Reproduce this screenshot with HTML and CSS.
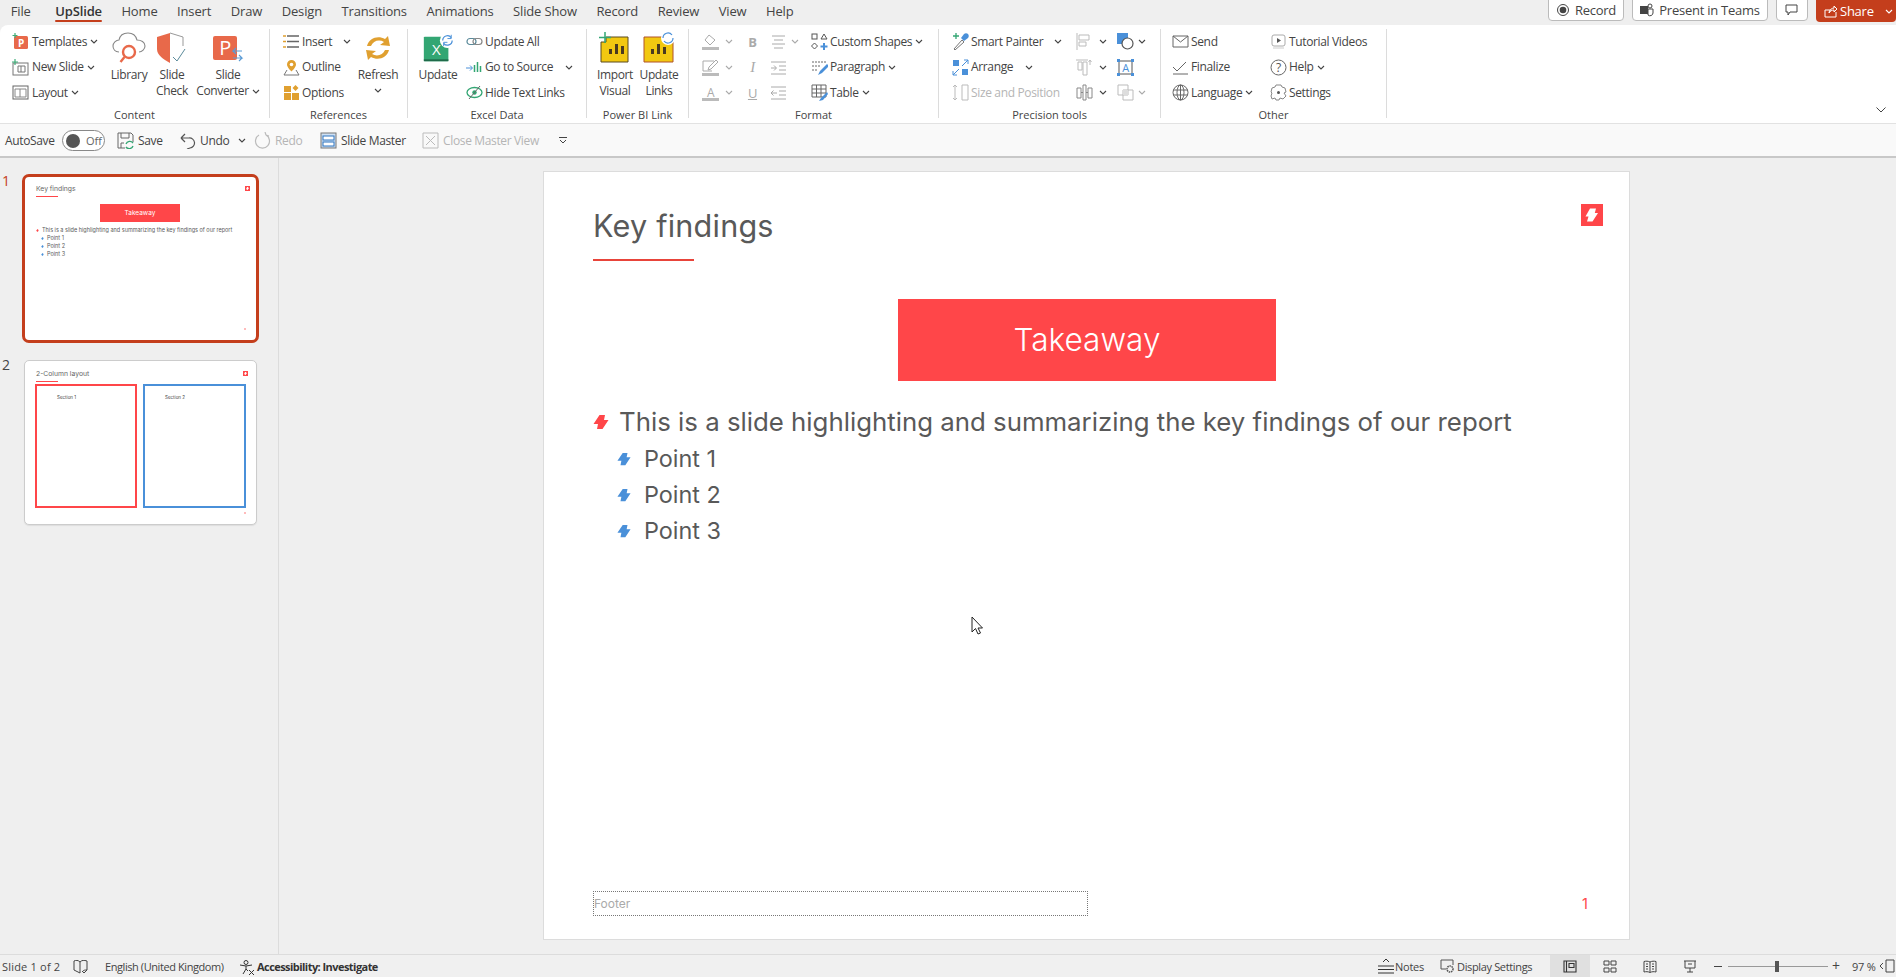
FILE: index.html
```html
<!DOCTYPE html>
<html lang="en">
<head>
<meta charset="utf-8">
<title>UpSlide - PowerPoint</title>
<link rel="stylesheet" href="styles.css">
</head>
<body>
<svg class="defs" width="0" height="0">
  <defs>
    <symbol id="chev" viewBox="0 0 8 5"><path d="M1 1l3 3 3-3" fill="none" stroke="currentColor" stroke-width="1.1"/></symbol>
    <symbol id="bolt" viewBox="0 0 16 16"><path d="M6.500 1H12l-1 5h4.500l-6 9H4l1-5H.5z" fill="currentColor"/></symbol>
  </defs>
</svg>
<div class="app">
  <header class="tabbar">
    <nav class="tabs">
      <span class="tab tab-file">File</span>
      <span class="tab tab-active">UpSlide</span>
      <span class="tab">Home</span>
      <span class="tab">Insert</span>
      <span class="tab">Draw</span>
      <span class="tab">Design</span>
      <span class="tab">Transitions</span>
      <span class="tab">Animations</span>
      <span class="tab">Slide Show</span>
      <span class="tab">Record</span>
      <span class="tab">Review</span>
      <span class="tab">View</span>
      <span class="tab">Help</span>
    </nav>
    <div class="actions">
      <span class="btn btn-record"><svg class="s14" viewBox="0 0 14 14"><circle cx="7" cy="7" r="5.500" fill="none" stroke="#444"/><circle cx="7" cy="7" r="3.300" fill="#444"/></svg>Record</span>
      <span class="btn btn-teams"><svg class="s14" viewBox="0 0 14 14"><rect x="0" y="3" width="8" height="8" fill="#444"/><circle cx="10" cy="3" r="2" fill="none" stroke="#444"/><path d="M8 6h5v4a3 3 0 0 1-5 2z" fill="none" stroke="#444"/></svg>Present in Teams</span>
      <span class="btn btn-comment"><svg class="s14" viewBox="0 0 14 14"><path d="M1 2h11v7H5l-2 3V9H1z" fill="none" stroke="#444"/></svg></span>
      <span class="btn-share"><svg class="s14" viewBox="0 0 14 14"><path d="M1 6v7h11V8M1 6h6M5 9c0-3 3-5 5-5V2l3 3-3 3V6c-2 0-4 1-5 3z" fill="none" stroke="#fff"/></svg><span class="share-label">Share</span><svg class="chev share-chev"><use href="#chev"/></svg></span>
    </div>
  </header>

  <section class="ribbon">
    <div class="group g-content">
      <div class="body">
        <div class="col c-content">
          <div class="row"><svg class="ic" viewBox="0 0 17 17"><rect x="2" y="3" width="14" height="13" rx="1.500" fill="#e8694a"/><text x="9" y="14" class="gl-p">P</text><path d="M3 0v5M.5 2.500h5" stroke="#3fae7a" stroke-width="1.200"/></svg>Templates<svg class="chev cm"><use href="#chev"/></svg></div>
          <div class="row"><svg class="ic" viewBox="0 0 17 17"><rect x="1" y="4" width="15" height="12" fill="none" stroke="#777"/><path d="M6 7h7v6H6zM9 7v6" fill="none" stroke="#777"/><path d="M3 0v6M0 3h6" stroke="#3fae7a" stroke-width="1.200"/></svg>New Slide<svg class="chev cm"><use href="#chev"/></svg></div>
          <div class="row"><svg class="ic" viewBox="0 0 17 17"><rect x="1" y="2" width="15" height="13" fill="none" stroke="#666"/><path d="M3 5h11v8H3zM8 5v8" fill="none" stroke="#888"/></svg>Layout<svg class="chev cm"><use href="#chev"/></svg></div>
        </div>
        <div class="big w-lib"><svg class="bi" viewBox="0 0 34 32"><path d="M7 20C3 20 1 17 1 14s3-6 6-6c1-5 5-7 9-7 5 0 8 3 9 7 4 0 8 2 8 6 0 3-3 6-6 6" fill="none" stroke="#888" stroke-width="1.100"/><circle cx="17" cy="20" r="6" fill="#fff" stroke="#e8694a" stroke-width="2.400"/><path d="M12.500 25l-4 5" stroke="#e8694a" stroke-width="2.400"/></svg><span>Library</span></div>
        <div class="big w-chk"><svg class="bi" viewBox="0 0 32 32"><path d="M14 1L1 5v12c0 6 6 10 13 14z" fill="#e8694a"/><path d="M14 1l13 4v9" fill="none" stroke="#999"/><path d="M17 25l4 4 8-12" fill="none" stroke="#5a8a9a"/></svg><span>Slide<br>Check</span></div>
        <div class="big w-conv"><svg class="bi" viewBox="0 0 32 32"><rect x="1" y="4" width="24" height="24" rx="2" fill="#e8694a"/><text x="13" y="23" class="gl-pb">P</text><path d="M30 19h-9l3-3M21 19l3 3M21 26h9l-3-3M30 26l-3 3" fill="none" stroke="#5b9bd5" stroke-width="1.100"/></svg><span>Slide<br>Converter<svg class="chev cm"><use href="#chev"/></svg></span></div>
      </div>
      <div class="glabel">Content</div>
    </div>

    <div class="group g-ref">
      <div class="body">
        <div class="col c-ref">
          <div class="row"><svg class="ic" viewBox="0 0 17 17"><path d="M4 3h12M4 8.500h12M4 14h12" stroke="#666" stroke-width="1.300"/><path d="M0 3h3M0 8.500h3M0 14h3" stroke="#e0a030" stroke-width="1.300"/></svg>Insert<svg class="chev ml-insert"><use href="#chev"/></svg></div>
          <div class="row"><svg class="ic" viewBox="0 0 17 17"><path d="M8.500 1a4.500 4.500 0 0 1 4.500 4.500c0 3-4.500 7-4.500 7S4 8.500 4 5.500A4.500 4.500 0 0 1 8.500 1z" fill="#e0a030"/><circle cx="8.500" cy="5.500" r="1.800" fill="#fff"/><path d="M4 11L1 16h15l-3-5" fill="none" stroke="#777"/></svg>Outline</div>
          <div class="row"><svg class="ic" viewBox="0 0 17 17"><rect x="1" y="2" width="7" height="6" fill="#e0a030"/><rect x="1" y="9" width="7" height="7" fill="#e0a030"/><rect x="9" y="9" width="7" height="7" fill="#e0a030"/><path d="M12.500 1l3 3-3 3-3-3z" fill="#e0a030"/></svg>Options</div>
        </div>
        <div class="big w-refresh"><svg class="bi" viewBox="0 0 34 32"><path d="M6 14C8 6 17 3 24 7l3-3 2 10-10-1 4-3c-5-3-11-1-13 4zM28 18C26 26 17 29 10 25l-3 3-2-10 10 1-4 3c5 3 11 1 13-4z" fill="#e0a030"/></svg><span>Refresh</span><svg class="chev cb"><use href="#chev"/></svg></div>
      </div>
      <div class="glabel">References</div>
    </div>

    <div class="group g-excel">
      <div class="body">
        <div class="big w-upd"><svg class="bi" viewBox="0 0 36 32"><rect x="3" y="4" width="26" height="26" rx="1" fill="#33a673"/><path d="M3 28h26v2H3z" fill="#1f6b4a"/><text x="16" y="23" class="gl-x">X</text><circle cx="28" cy="8" r="8" fill="#fff"/><path d="M23 8a5 5 0 0 1 9-3M33 8a5 5 0 0 1-9 3" fill="none" stroke="#4a90d9" stroke-width="1.300"/><path d="M32 2v4h-4M24 14v-4h4" fill="none" stroke="#4a90d9"/></svg><span>Update</span></div>
        <div class="col c-excel">
          <div class="row"><svg class="ic" viewBox="0 0 17 17"><rect x="1" y="5.500" width="9" height="6" rx="3" fill="none" stroke="#5a8a9a" stroke-width="1.200"/><rect x="7" y="5.500" width="9" height="6" rx="3" fill="none" stroke="#888" stroke-width="1.200"/></svg>Update All</div>
          <div class="row"><svg class="ic" viewBox="0 0 17 17"><path d="M0 9h6M4 6.500L6.500 9 4 11.500" fill="none" stroke="#4a90d9"/><path d="M8.500 6v7M11.500 3v10M14.500 7v6" stroke="#33a673" stroke-width="1.500"/></svg>Go to Source<svg class="chev ml-go"><use href="#chev"/></svg></div>
          <div class="row"><svg class="ic" viewBox="0 0 17 17"><ellipse cx="8.500" cy="8.500" rx="7.500" ry="5" fill="none" stroke="#33a673" stroke-width="1.300"/><circle cx="8.500" cy="8.500" r="2.200" fill="#33a673"/><path d="M3 15L14 2" stroke="#666"/></svg>Hide Text Links</div>
        </div>
      </div>
      <div class="glabel">Excel Data</div>
    </div>

    <div class="group g-pbi">
      <div class="body b-pbi">
        <div class="big w-imp"><svg class="bi" viewBox="0 0 32 32"><path d="M2 10h5V5h22v25H2z" fill="#f2c811" stroke="#5a4a20"/><path d="M10 22h3v-5h-3zM16 22h3v-10h-3zM22 22h3v-8h-3z" fill="#4a3a20"/><path d="M6 0v11M0 5.500h12" stroke="#33a673" stroke-width="1.500"/></svg><span>Import<br>Visual</span></div>
        <div class="big w-upl"><svg class="bi" viewBox="0 0 32 32"><path d="M1 5h22v5h7v20H1z" fill="#f2c811" stroke="#b0522a"/><path d="M8 22h3v-5H8zM14 22h3v-10h-3zM20 22h3v-7h-3z" fill="#4a3a20"/><circle cx="25" cy="6" r="7" fill="#fff"/><path d="M20 6a5 5 0 0 1 9-3M30 6a5 5 0 0 1-9 3" fill="none" stroke="#4a90d9" stroke-width="1.200"/></svg><span>Update<br>Links</span></div>
      </div>
      <div class="glabel">Power BI Link</div>
    </div>

    <div class="group g-format">
      <div class="body">
        <div class="col c-f1 dim">
          <div class="row"><svg class="ic" viewBox="0 0 17 17"><path d="M7 2l6 5-5 5-5-5z" fill="none" stroke="#aaa"/><path d="M0 14h17v3H0z" fill="#bbb"/></svg><svg class="chev"><use href="#chev"/></svg></div>
          <div class="row"><svg class="ic" viewBox="0 0 17 17"><path d="M1 2h11M1 2v10h9M14 1l2 2-7 7-3 1 1-3z" fill="none" stroke="#aaa"/><path d="M0 14h17v3H0z" fill="#bbb"/></svg><svg class="chev"><use href="#chev"/></svg></div>
          <div class="row"><svg class="ic" viewBox="0 0 17 17"><text x="8.500" y="13" class="gl-a">A</text><path d="M0 14h17v3H0z" fill="#bbb"/></svg><svg class="chev"><use href="#chev"/></svg></div>
        </div>
        <div class="col c-f2 dim">
          <div class="row"><span class="fmt fmt-b">B</span></div>
          <div class="row"><span class="fmt fmt-i">I</span></div>
          <div class="row"><span class="fmt fmt-u">U</span></div>
        </div>
        <div class="col c-f3 dim">
          <div class="row"><svg class="ic ic0" viewBox="0 0 17 17"><path d="M2 3h13M4 7h9M2 11h13M4 15h9" stroke="#aaa"/></svg><svg class="chev cg"><use href="#chev"/></svg></div>
          <div class="row"><svg class="ic ic0" viewBox="0 0 17 17"><path d="M1 3h15M9 7h7M9 11h7M1 15h15M1 9h5M4 6.500L6.500 9 4 11.500" fill="none" stroke="#aaa"/></svg></div>
          <div class="row"><svg class="ic ic0" viewBox="0 0 17 17"><path d="M1 3h15M9 7h7M9 11h7M1 15h15M1 9h6M3.500 6.500L1 9l2.500 2.500" fill="none" stroke="#aaa"/></svg></div>
        </div>
        <div class="col c-f4">
          <div class="row"><svg class="ic" viewBox="0 0 17 17"><rect x="1" y="1" width="5" height="5" fill="none" stroke="#555"/><path d="M13 1l3 5h-6z" fill="none" stroke="#555"/><path d="M3.500 10l3 3-3 3-3-3z" fill="none" stroke="#555"/><path d="M13 10v7M9.500 13.500h7" stroke="#4a90d9" stroke-width="2"/></svg>Custom Shapes<svg class="chev cm"><use href="#chev"/></svg></div>
          <div class="row"><svg class="ic" viewBox="0 0 17 17"><path d="M1 3h14M1 7h9M1 11h5" stroke="#666" stroke-dasharray="2 1"/><path d="M16 5l-7 7-2 4 4-2 7-7z" fill="#4a90d9"/></svg>Paragraph<svg class="chev cm"><use href="#chev"/></svg></div>
          <div class="row"><svg class="ic" viewBox="0 0 17 17"><path d="M1 1h14v12H1zM1 5h14M1 9h14M5.500 1v12M10 1v12" fill="none" stroke="#666"/><path d="M16 8l-6 6-2 3 4-1 5-6z" fill="#4a90d9"/></svg>Table<svg class="chev cm"><use href="#chev"/></svg></div>
        </div>
      </div>
      <div class="glabel">Format</div>
    </div>

    <div class="group g-prec">
      <div class="body">
        <div class="col c-p1">
          <div class="row"><svg class="ic" viewBox="0 0 17 17"><path d="M2 16l8-9 2 2-9 8z" fill="none" stroke="#777"/><path d="M9 5l3-4c1-1 3-1 4 0s1 3 0 4l-4 3z" fill="#4a90d9"/><path d="M4 0v6M1 3h6" stroke="#33a673" stroke-width="1.300"/></svg>Smart Painter<svg class="chev ml-sp"><use href="#chev"/></svg></div>
          <div class="row"><svg class="ic" viewBox="0 0 17 17"><rect x="1" y="1" width="6" height="6" fill="#4a90d9"/><rect x="10" y="10" width="6" height="6" fill="#4a90d9"/><path d="M10 7l6-6M12 1h4v4M7 10l-6 6M5 16H1v-4" fill="none" stroke="#4a90d9"/></svg>Arrange<svg class="chev ml-ar"><use href="#chev"/></svg></div>
          <div class="row dimtext"><svg class="ic" viewBox="0 0 17 17"><path d="M10 1h6v15h-6zM3 1v15M1 3l2-2 2 2M1 14l2 2 2-2" fill="none" stroke="#bbb"/></svg>Size and Position</div>
        </div>
        <div class="col c-p2">
          <div class="row"><svg class="ic" viewBox="0 0 17 17"><path d="M1 0v17M3 2h10v5H3zM3 9h7v4H3z" fill="none" stroke="#bbb"/></svg><svg class="chev"><use href="#chev"/></svg></div>
          <div class="row"><svg class="ic" viewBox="0 0 17 17"><path d="M0 1h12M2 3h4v8H2zM7 3h4v13H7zM14 6V1M12.500 3L14 1l1.500 2" fill="none" stroke="#bbb"/></svg><svg class="chev"><use href="#chev"/></svg></div>
          <div class="row"><svg class="ic" viewBox="0 0 17 17"><path d="M1 4h4v10H1zM12 4h4v10h-4zM7 1h3v15H7zM5 8.500h2M10 8.500h2" fill="none" stroke="#888"/></svg><svg class="chev"><use href="#chev"/></svg></div>
        </div>
        <div class="col c-p3">
          <div class="row"><svg class="ic" viewBox="0 0 17 17"><rect x="0" y="0" width="11" height="11" fill="#4a90d9"/><circle cx="10.500" cy="10.500" r="5.500" fill="#fff" stroke="#555" stroke-width="1.200"/></svg><svg class="chev"><use href="#chev"/></svg></div>
          <div class="row"><svg class="ic" viewBox="0 0 17 17"><path d="M2 2h13v13H2z" fill="none" stroke="#555"/><path d="M0 0h3v3H0zM14 0h3v3h-3zM0 14h3v3H0zM14 14h3v3h-3z" fill="#4a90d9"/><text x="8.500" y="13" class="gl-ab">A</text></svg></div>
          <div class="row dim"><svg class="ic" viewBox="0 0 17 17"><path d="M1 1h10v10H1zM6 6h10v10H6z" fill="none" stroke="#bbb"/><path d="M6 6h5v5H6z" fill="#ddd"/></svg><svg class="chev"><use href="#chev"/></svg></div>
        </div>
      </div>
      <div class="glabel">Precision tools</div>
    </div>

    <div class="group g-other">
      <div class="body">
        <div class="col c-o1">
          <div class="row"><svg class="ic" viewBox="0 0 17 17"><path d="M1 3h15v11H1zM1 3l7.500 6L16 3" fill="none" stroke="#666"/></svg>Send</div>
          <div class="row"><svg class="ic" viewBox="0 0 17 17"><path d="M1 15h15" stroke="#666"/><path d="M1 8l4 4 9-9" fill="none" stroke="#666"/></svg>Finalize</div>
          <div class="row"><svg class="ic" viewBox="0 0 17 17"><circle cx="8.500" cy="8.500" r="7.500" fill="none" stroke="#666"/><ellipse cx="8.500" cy="8.500" rx="3.500" ry="7.500" fill="none" stroke="#666"/><path d="M1 6h15M1 11h15M8.500 1v15" stroke="#666"/></svg>Language<svg class="chev cm"><use href="#chev"/></svg></div>
        </div>
        <div class="col c-o2">
          <div class="row"><svg class="ic" viewBox="0 0 17 17"><rect x="2" y="2" width="13" height="11" rx="2" fill="none" stroke="#aaa"/><path d="M7 5l4 2.500L7 10z" fill="#555"/><path d="M3 15h11" stroke="#ccc"/></svg>Tutorial Videos</div>
          <div class="row"><svg class="ic" viewBox="0 0 17 17"><circle cx="8.500" cy="8.500" r="7.500" fill="none" stroke="#666"/><text x="8.500" y="12.500" class="gl-q">?</text></svg>Help<svg class="chev cm"><use href="#chev"/></svg></div>
          <div class="row"><svg class="ic" viewBox="0 0 17 17"><path d="M6 1h5l1 2 3 1 1 4-2 1 2 3-3 3-3-1-1 2H6l-1-2-3 1-1-3 1-3-1-1 1-4 3-1z" fill="none" stroke="#888"/><circle cx="8.500" cy="8.500" r="1.500" fill="#555"/></svg>Settings</div>
        </div>
      </div>
      <div class="glabel">Other</div>
    </div>
    <div class="collapse"><svg class="collapse-ic" viewBox="0 0 10 6"><path d="M.5.500L5 5 9.500.500" fill="none" stroke="#444"/></svg></div>
  </section>

  <section class="qat">
    <span class="q q-auto">AutoSave</span>
    <span class="toggle"><span class="knob"></span><span class="toggle-off">Off</span></span>
    <span class="q q-save"><svg class="ic" viewBox="0 0 17 17"><path d="M1 1h13l2 2v7M1 1v15h7M4 1v5h8V1M4 16v-5h3" fill="none" stroke="#666"/><path d="M9 12a4 4 0 0 1 7-1M16 14a4 4 0 0 1-7 1" fill="none" stroke="#33a673" stroke-width="1.300"/></svg>Save</span>
    <span class="q q-undo"><svg class="ic" viewBox="0 0 17 17"><path d="M2 6h8a5 5 0 0 1 1 10l-3 1M2 6l4-4M2 6l4 4" fill="none" stroke="#555" stroke-width="1.200"/></svg>Undo<svg class="chev q-chev"><use href="#chev"/></svg></span>
    <span class="q q-redo dimtext"><svg class="ic" viewBox="0 0 17 17"><path d="M12 3a7 7 0 1 1-7 0M12 3l-1-3M12 3l3 1" fill="none" stroke="#bbb" stroke-width="1.200"/></svg>Redo</span>
    <span class="q q-master"><svg class="ic" viewBox="0 0 17 17"><rect x="1" y="1" width="15" height="15" fill="#cfe0f3" stroke="#777"/><rect x="3" y="4" width="11" height="4" fill="#fff" stroke="#2f75c0"/><rect x="3" y="10" width="11" height="4" fill="#fff" stroke="#2f75c0"/></svg>Slide Master</span>
    <span class="q q-close dimtext"><svg class="ic" viewBox="0 0 17 17"><path d="M1 1h15v15H1zM4 4l9 9M13 4l-9 9" fill="none" stroke="#bbb"/></svg>Close Master View</span>
    <svg class="q-more" viewBox="0 0 8 7"><path d="M0 .500h8M1 3l3 3 3-3" fill="none" stroke="#444"/></svg>
  </section>

  <main class="main">
    <aside class="panel">
      <div class="thumb-row">
        <span class="num num-on">1</span>
        <div class="thumb thumb-on">
          <div class="t-head"><div><div class="t-title">Key findings</div><div class="t-rule"></div></div><svg class="t-badge" viewBox="0 0 16 16"><rect width="16" height="16" fill="#ff4649"/><path d="M7 3h4l-1 3.500h3L8 13H5l1-4H3z" fill="#fff"/></svg></div>
          <div class="t-take">Takeaway</div>
          <div class="t-line"><svg class="t-bolt red"><use href="#bolt"/></svg>This is a slide highlighting and summarizing the key findings of our report</div>
          <div class="t-line t-sub"><svg class="t-bolt blue"><use href="#bolt"/></svg>Point 1</div>
          <div class="t-line t-sub"><svg class="t-bolt blue"><use href="#bolt"/></svg>Point 2</div>
          <div class="t-line t-sub"><svg class="t-bolt blue"><use href="#bolt"/></svg>Point 3</div>
          <div class="t-pg"></div>
        </div>
      </div>
      <div class="thumb-row row2">
        <span class="num">2</span>
        <div class="thumb thumb-off">
          <div class="t-head"><div><div class="t-title">2-Column layout</div><div class="t-rule"></div></div><svg class="t-badge" viewBox="0 0 16 16"><rect width="16" height="16" fill="#ff4649"/><path d="M7 3h4l-1 3.500h3L8 13H5l1-4H3z" fill="#fff"/></svg></div>
          <div class="t-cols">
            <div class="t-col t-red">Section 1</div>
            <div class="t-col t-blue">Section 2</div>
          </div>
          <div class="t-pg"></div>
        </div>
      </div>
    </aside>
    <div class="stage">
      <article class="slide">
        <div class="s-head">
          <div>
            <h1 class="s-title">Key findings</h1>
            <div class="s-rule"></div>
          </div>
          <svg class="s-badge" viewBox="0 0 22 22"><rect width="22" height="22" fill="#ff4649"/><path d="M9 4.500h6L13.800 9H17L11.500 17.500H6L7.500 12.500H4.500z" fill="#fff"/></svg>
        </div>
        <div class="s-take">Takeaway</div>
        <ul class="s-list">
          <li class="s-main"><svg class="b-red"><use href="#bolt"/></svg>This is a slide highlighting and summarizing the key findings of our report</li>
          <li class="s-pt"><svg class="b-blue"><use href="#bolt"/></svg>Point 1</li>
          <li class="s-pt"><svg class="b-blue"><use href="#bolt"/></svg>Point 2</li>
          <li class="s-pt"><svg class="b-blue"><use href="#bolt"/></svg>Point 3</li>
        </ul>
        <div class="s-foot">
          <div class="s-footer">Footer</div>
          <div class="s-page">1</div>
        </div>
        <svg class="cursor" viewBox="0 0 12 20"><path d="M1 1v15l3.500-3.500L7 18l2.500-1-2.500-5h4.500z" fill="#fff" stroke="#222"/></svg>
      </article>
    </div>
  </main>

  <footer class="status">
    <span class="st st-slide">Slide 1 of 2</span>
    <svg class="st-ic st-book" viewBox="0 0 15 14"><path d="M1 1c2-1 4-1 6 1 2-2 4-2 7-1v9c-2 0-3 0-4 1M7 2v11L1 10V1" fill="none" stroke="#444"/><path d="M9 11l2 2 3-3" fill="none" stroke="#444"/></svg>
    <span class="st st-lang">English (United Kingdom)</span>
    <svg class="st-ic st-acc" viewBox="0 0 15 15"><circle cx="6" cy="2.500" r="2" fill="none" stroke="#333"/><path d="M0 5l6 1 6-1M6 6v3l-3 5M6 9l2 2M9 10l5 5M14 10l-5 5" fill="none" stroke="#333"/></svg>
    <span class="st st-inv">Accessibility: Investigate</span>
    <span class="st-right">
      <svg class="st-ic st-notes" viewBox="0 0 16 16"><path d="M0 8h16M0 11.500h16M0 15h16M5 4l3-3 3 3" fill="none" stroke="#333"/></svg>
      <span class="st st-n">Notes</span>
      <svg class="st-ic st-disp" viewBox="0 0 15 14"><path d="M6 10H1V1h12v5" fill="none" stroke="#555"/><circle cx="10" cy="10" r="3" fill="none" stroke="#555" stroke-width="1.500" stroke-dasharray="1.500 .7"/></svg>
      <span class="st st-d">Display Settings</span>
      <span class="view view-on"><svg class="v-ic" viewBox="0 0 14 13"><path d="M1 1h12v11H1zM3.500 1v11M6 3.500h5v4H6z" fill="none" stroke="#333" stroke-width="1.100"/></svg></span>
      <span class="view"><svg class="v-ic" viewBox="0 0 14 13"><path d="M1 1h5v4H1zM8 1h5v4H8zM1 8h5v4H1zM8 8h5v4H8z" fill="none" stroke="#444"/></svg></span>
      <span class="view"><svg class="v-ic" viewBox="0 0 14 13"><path d="M7 2C5 1 3 1 1 1.500V12c2-.5 4-.5 6 .5 2-1 4-1 6-.5V1.500C11 1 9 1 7 2zM7 2v10M3 4h2M3 6.500h2M3 9h2M9 4h2M9 6.500h2M9 9h2" fill="none" stroke="#444"/></svg></span>
      <span class="view"><svg class="v-ic" viewBox="0 0 14 13"><path d="M1 1h12M2 1v7h10V1M7 8v2M4 12h6M7 10v2M5 4h4" fill="none" stroke="#444"/></svg></span>
      <span class="z-minus"></span>
      <span class="z-track"><span class="z-thumb"></span></span>
      <span class="z-plus">+</span>
      <span class="st z-pct">97 %</span>
      <svg class="st-ic z-fit" viewBox="0 0 16 14"><path d="M3 4L0 7l3 3M6 1h8v12H6z" fill="none" stroke="#444"/></svg>
    </span>
  </footer>
</div>
</body>
</html>
```
FILE: styles.css
```css
* { box-sizing: border-box; }
html, body { margin: 0; padding: 0; height: 100%; overflow: hidden; }
body { background: #efefef; color: #444; font: 12px/16px "Open Sans", "Noto Sans", sans-serif; letter-spacing: -0.35px; }
.defs { position: absolute; }
.app { display: flex; flex-direction: column; height: 977px; width: 1896px; }

/* tabs */
.tabbar { height: 25px; flex: none; display: flex; justify-content: space-between; }
.tabs { display: flex; padding-left: 1px; }
.tab { padding: 2px 9.750px 0; font-size: 13px; line-height: 18px; color: #444; position: relative; letter-spacing: -0.15px; }
.tab-file { margin-right: 5px; }
.tab-active { font-weight: 600; color: #333; }
.tab-active::after { content: ""; position: absolute; left: 10px; right: 10px; top: 20px; height: 2px; background: #c43e1c; border-radius: 1px; }
.actions { display: flex; align-items: flex-start; }
.btn { height: 22px; margin-top: -1px; margin-right: 8px; background: #fff; border: 1px solid #bbb; border-radius: 0 0 4px 4px; display: flex; align-items: center; gap: 5px; font-size: 13px; color: #444; justify-content: center; letter-spacing: -0.25px; }
.btn-record { width: 76px; }
.btn-teams { width: 136px; }
.btn-comment { width: 32px; }
.s14 { width: 14px; height: 14px; flex: none; }
.btn-share { width: 80px; height: 22px; background: #c43e1c; color: #fff; border-radius: 0 0 4px 4px; display: flex; align-items: center; padding-left: 8px; font-size: 13px; letter-spacing: -0.25px; }
.share-label { margin-left: 2px; }

/* ribbon */
.ribbon { height: 98px; flex: none; background: #fff; border-radius: 8px 0 0 0; display: flex; padding-top: 4px; }
.group { height: 89px; flex: none; display: flex; flex-direction: column; border-right: 1px solid #dcdcdc; }
.g-content { width: 270px; }
.g-ref { width: 138px; }
.g-excel { width: 179px; }
.g-pbi { width: 102px; }
.g-format { width: 250px; }
.g-prec { width: 222px; }
.g-other { width: 226px; }
.body { height: 76.500px; display: flex; flex: none; }
.b-pbi { padding-left: 4px; }
.glabel { text-align: center; line-height: 18px; height: 12.500px; font-size: 11px; color: #444; letter-spacing: 0; }
.col { display: flex; flex-direction: column; flex: none; }
.row { height: 25.500px; display: flex; align-items: center; white-space: nowrap; flex: none; }
.ic { width: 17px; height: 17px; margin-right: 2px; flex: none; }
.c-content .ic { margin-right: 3px; }
.q .ic { margin-right: 4px; }
.ic0 { margin-right: 0; }
.chev { width: 8px; height: 5px; flex: none; color: #444; display: inline-block; }
.btn-share .share-chev { margin-left: 11px; color: #fff; }
.cm { margin-left: 3px; }
.big { flex: none; display: flex; flex-direction: column; align-items: center; text-align: center; white-space: nowrap; padding-top: 3px; }
.bi { width: 34px; height: 32px; margin-bottom: 3px; flex: none; }
.big .chev.cm { vertical-align: 1px; }
.cb { margin-top: 5px; }
.dim .chev { color: #aaa; }
.dimtext { color: #b5b5b5; }

.c-content { width: 107px; padding-left: 12px; }
.w-lib { width: 44px; }
.w-chk { width: 42px; }
.w-conv { width: 70px; }
.c-ref { width: 83px; padding-left: 13px; }
.ml-insert { margin-left: 11px; }
.w-refresh { width: 50px; }
.w-upd { width: 60px; margin-right: -2px; }
.ml-go { margin-left: 12px; }
.w-imp { width: 48px; }
.w-upl { width: 40px; }
.c-f1 { width: 52px; padding-left: 13px; }
.c-f1 .ic { margin-right: 3px; }
.c-f1 .chev { margin-left: 3px; }
.c-f2 { width: 23px; align-items: center; }
.c-f3 { width: 47px; padding-left: 6px; }
.cg { margin-left: 4px; color: #aaa; }
.fmt { color: #aaa; font-size: 13px; }
.fmt-b { font-weight: 700; }
.fmt-i { font-style: italic; font-family: "Liberation Serif", serif; font-size: 15px; }
.fmt-u { text-decoration: underline; }
.c-p1 { width: 137px; padding-left: 13px; }
.ml-sp { margin-left: 11px; }
.ml-ar { margin-left: 12px; }
.c-p2 { width: 41px; }
.c-p3 { width: 30px; }
.c-p2 .ic, .c-p3 .ic { margin-right: 3px; }
.c-p2 .chev { margin-left: 3px; }
.c-p3 .chev { margin-left: 1px; }
.c-o1 { width: 109px; padding-left: 11px; }
.c-o2 { width: 110px; }
.collapse { flex: 1; display: flex; justify-content: flex-end; align-items: flex-end; padding: 0 10px 10px 0; }
.collapse-ic { width: 10px; height: 6px; }

/* glyph labels inside icons */
.gl-p { font: 700 10px "Open Sans", sans-serif; fill: #fff; text-anchor: middle; }
.gl-pb { font: 400 20px "Open Sans", sans-serif; fill: #fff; text-anchor: middle; }
.gl-x { font: 400 16px "Open Sans", sans-serif; fill: #fff; text-anchor: middle; }
.gl-a { font: 400 12px "Open Sans", sans-serif; fill: #aaa; text-anchor: middle; }
.gl-ab { font: 400 11px "Open Sans", sans-serif; fill: #4a90d9; text-anchor: middle; }
.gl-q { font: 400 12px "Open Sans", sans-serif; fill: #555; text-anchor: middle; }

/* quick access */
.qat { height: 35px; flex: none; background: #f9f9f9; border-top: 1px solid #e2e2e2; border-bottom: 2px solid #c8c8c8; display: flex; align-items: center; padding-top: 1px; }
.q { display: flex; align-items: center; white-space: nowrap; }
.q-auto { margin-left: 5px; width: 57px; }
.toggle { width: 43px; height: 21px; border: 1px solid #888; border-radius: 11px; display: flex; align-items: center; padding-left: 3px; background: #fff; }
.knob { width: 14px; height: 14px; border-radius: 50%; background: #555; }
.toggle-off { margin-left: 6px; font-size: 11px; color: #666; letter-spacing: 0; }
.q-save { margin-left: 12px; width: 62px; }
.q-undo { width: 75px; }
.q-chev { margin-left: 9px; }
.q-redo { width: 66px; }
.q-master { width: 102px; }
.q-close { width: 137px; }
.q-more { width: 8px; height: 7px; }

/* main */
.main { flex: 1; display: flex; min-height: 0; }
.panel { width: 279px; flex: none; padding-top: 16px; border-right: 1px solid #dcdcdc; border-bottom: 1px solid #dcdcdc; display: flex; flex-direction: column; }
.thumb-row { display: flex; align-items: flex-start; }
.row2 { margin-top: 17px; }
.num { width: 22px; padding-left: 2px; margin-top: -1px; font-size: 14px; line-height: 16px; color: #444; }
.row2 .num { width: 24px; margin-top: -3px; }
.num-on { color: #c43e1c; }
.thumb { background: #fff; position: relative; font-family: Inter, sans-serif; letter-spacing: 0; color: #595959; }
.thumb-on { width: 237px; height: 169px; border: 3px solid #c43e1c; border-radius: 7px; padding: 7px 6px 0 11px; }
.thumb-off { width: 233px; height: 165px; border: 1px solid #ccc; border-radius: 5px; padding: 8px 8px 0 11px; box-shadow: 0 1px 1px #ddd; }
.t-head { display: flex; justify-content: space-between; align-items: flex-start; height: 15px; }
.t-title { font-size: 6.800px; line-height: 9px; color: #666; }
.t-rule { width: 22px; height: 1px; background: #ff4649; margin-top: 3px; }
.t-badge { width: 5px; height: 5px; margin-top: 2px; }
.t-take { width: 80px; height: 18px; margin: 5px 0 0 64px; background: #ff4649; color: #fff; text-align: center; font-size: 6.500px; line-height: 18px; }
.t-line { display: flex; align-items: center; font-size: 5.500px; line-height: 8px; height: 8px; white-space: nowrap; margin-top: 4px; }
.t-sub { padding-left: 5px; margin-top: 0; }
.t-bolt { width: 3px; height: 3px; margin-right: 3px; flex: none; }
.red { color: #ff4649; }
.blue { color: #4a90d9; }
.t-pg { position: absolute; right: 10px; bottom: 10px; width: 2px; height: 2px; background: #fbb; }
.t-cols { display: flex; gap: 6px; margin: 0 0 0 -1px; }
.t-col { width: 102px; height: 124px; border: 2px solid #ff4649; padding: 9px 0 0 20px; font-size: 4.500px; line-height: 5px; color: #444; }
.t-blue { width: 103px; border-color: #4a90d9; }

.stage { flex: 1; padding: 13px 0 0 264px; border-bottom: 1px solid #dcdcdc; }
.slide { width: 1087px; height: 769px; background: #fff; border: 1px solid #dcdcdc; position: relative; display: flex; flex-direction: column; font-family: Inter, sans-serif; letter-spacing: 0; color: #595959; padding: 0 26px 23px 49px; }
.s-head { display: flex; justify-content: space-between; align-items: flex-start; height: 127px; flex: none; }
.s-title { margin: 32px 0 0; font-size: 30.600px; line-height: 44px; font-weight: 400; letter-spacing: 0.2px; color: #595959; }
.s-rule { width: 101px; height: 2px; background: #e8443a; margin-top: 11px; }
.s-badge { width: 22px; height: 22px; margin-top: 32px; }
.s-take { width: 378px; height: 82px; flex: none; margin-left: 305px; background: #ff4649; color: #fff; font-size: 31.500px; font-weight: 300; line-height: 82px; text-align: center; }
.s-list { list-style: none; margin: 23px 0 0; padding: 0; }
.s-main, .s-pt { display: flex; align-items: center; white-space: nowrap; }
.s-main { font-size: 25.800px; line-height: 36px; margin-bottom: 1px; }
.s-pt { font-size: 23.400px; line-height: 36px; padding-left: 24px; }
.b-red { width: 16px; height: 16px; margin-right: 10px; color: #ff4649; flex: none; }
.b-blue { width: 14px; height: 14px; margin-right: 13px; color: #4a90d9; flex: none; }
.s-foot { margin-top: auto; display: flex; justify-content: space-between; align-items: center; }
.s-footer { width: 495px; height: 25px; border: 1px dotted #777; font-size: 12px; line-height: 23px; color: #aaa; }
.s-page { color: #ff4649; font-size: 14.500px; padding-right: 15px; }
.cursor { position: absolute; left: 427px; top: 444px; width: 12px; height: 20px; }

/* status */
.status { height: 22px; flex: none; display: flex; align-items: center; background: #f0f0f0; white-space: nowrap; font-size: 11px; letter-spacing: -0.25px; padding-top: 2px; }
.st { display: block; }
.st-slide { margin-left: 2px; width: 71px; letter-spacing: 0.2px; }
.st-ic { flex: none; }
.st-book { width: 15px; height: 14px; }
.st-lang { margin-left: 17px; width: 135px; letter-spacing: -0.42px; }
.st-acc { width: 15px; height: 15px; }
.st-inv { margin-left: 2px; font-weight: 700; color: #333; letter-spacing: -0.55px; }
.st-right { margin-left: auto; display: flex; align-items: center; height: 22px; margin-top: -2px; }
.st-notes { width: 16px; height: 16px; }
.st-n { margin: 2px 0 0 1px; width: 45px; }
.st-disp { width: 15px; height: 14px; }
.st-d { margin: 2px 0 0 2px; width: 93px; letter-spacing: -0.35px; }
.view { width: 40px; height: 22px; display: flex; align-items: center; justify-content: center; }
.view-on { background: #e0e0e0; }
.v-ic { width: 14px; height: 13px; }
.z-minus { width: 8px; height: 1px; background: #444; margin-left: 4px; }
.z-track { width: 100px; height: 1px; background: #999; margin-left: 6px; position: relative; }
.z-thumb { position: absolute; left: 47px; top: -5px; width: 4px; height: 11px; background: #555; }
.z-plus { margin-left: 4px; width: 14px; font-size: 14px; }
.z-pct { margin: 2px 0 0 6px; width: 28px; }
.z-fit { width: 16px; height: 14px; }
```
